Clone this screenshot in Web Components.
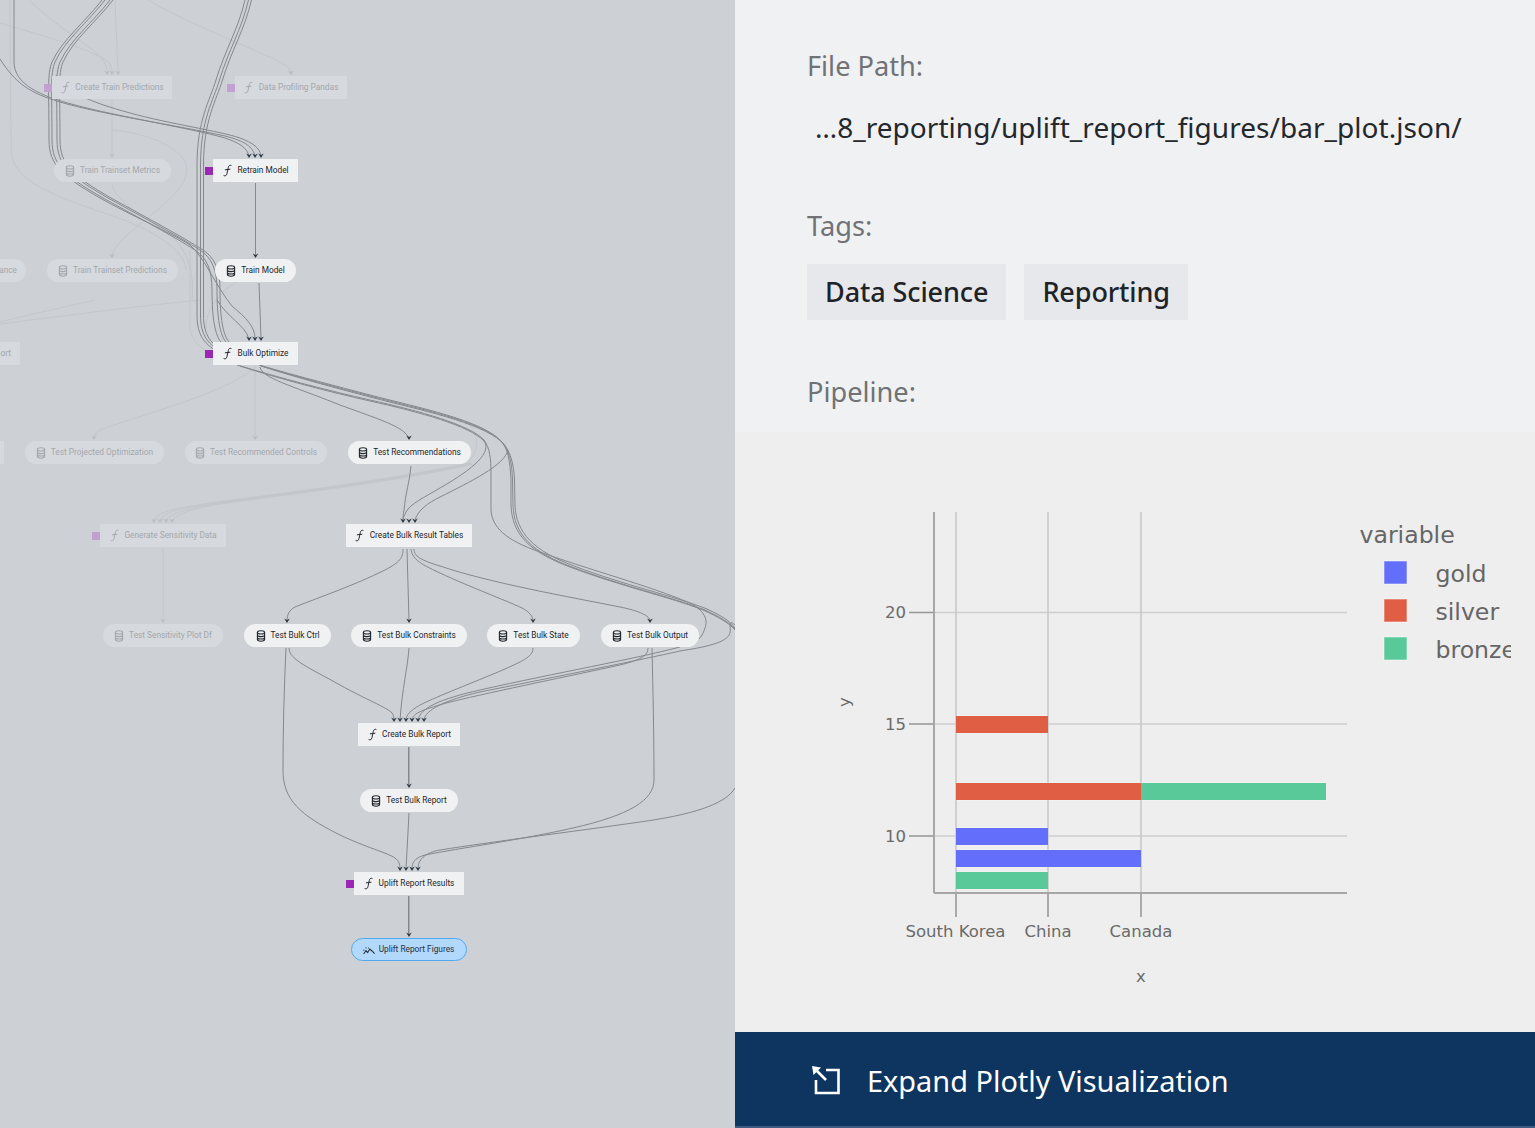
<!DOCTYPE html>
<html lang="en">
<head>
<meta charset="utf-8">
<title>Pipeline viewer</title>
<style>
  html, body { margin: 0; padding: 0; height: 100%; overflow: hidden; }
  body { font-family: "Noto Sans", sans-serif; }
</style>
</head>
<body>
<viz-app>
  <flow-graph slot="graph">
    <flow-node x="52" y="76" w="120" kind="task" param faded>Create Train Predictions</flow-node>
    <flow-node x="235" y="76" w="112" kind="task" param faded>Data Profiling Pandas</flow-node>
    <flow-node x="54" y="159" w="117" kind="data" faded>Train Trainset Metrics</flow-node>
    <flow-node x="213" y="159" w="85" kind="task" param>Retrain Model</flow-node>
    <flow-node x="0" y="259" w="26" kind="none" faded cut>ance</flow-node>
    <flow-node x="47" y="259" w="131" kind="data" faded>Train Trainset Predictions</flow-node>
    <flow-node x="215" y="259" w="81" kind="data">Train Model</flow-node>
    <flow-node x="0" y="342" w="20" kind="none" rect faded cut>ort</flow-node>
    <flow-node x="213" y="342" w="85" kind="task" param>Bulk Optimize</flow-node>
    <flow-node x="0" y="441" w="4" kind="none" rect faded></flow-node>
    <flow-node x="25" y="441" w="139" kind="data" faded>Test Projected Optimization</flow-node>
    <flow-node x="185" y="441" w="142" kind="data" faded>Test Recommended Controls</flow-node>
    <flow-node x="348" y="441" w="123" kind="data">Test Recommendations</flow-node>
    <flow-node x="100" y="524" w="126" kind="task" param faded>Generate Sensitivity Data</flow-node>
    <flow-node x="346" y="524" w="126" kind="task">Create Bulk Result Tables</flow-node>
    <flow-node x="103" y="624" w="120" kind="data" faded>Test Sensitivity Plot Df</flow-node>
    <flow-node x="244" y="624" w="87" kind="data">Test Bulk Ctrl</flow-node>
    <flow-node x="351" y="624" w="116" kind="data">Test Bulk Constraints</flow-node>
    <flow-node x="487" y="624" w="93" kind="data">Test Bulk State</flow-node>
    <flow-node x="601" y="624" w="98" kind="data">Test Bulk Output</flow-node>
    <flow-node x="358" y="723" w="102" kind="task">Create Bulk Report</flow-node>
    <flow-node x="360" y="789" w="98" kind="data">Test Bulk Report</flow-node>
    <flow-node x="354" y="872" w="110" kind="task" param>Uplift Report Results</flow-node>
    <flow-node x="351" y="938" w="116" kind="plot" selected>Uplift Report Figures</flow-node>
  </flow-graph>
  <meta-panel slot="panel">
    <meta-label>File Path:</meta-label>
    <meta-value>…8_reporting/uplift_report_figures/bar_plot.json/</meta-value>
    <meta-label style="margin-top:54px">Tags:</meta-label>
    <tag-row><meta-tag>Data Science</meta-tag><meta-tag>Reporting</meta-tag></tag-row>
    <meta-label style="margin-top:50px">Pipeline:</meta-label>
    <plotly-chart slot="chart"></plotly-chart>
    <expand-button slot="action">Expand Plotly Visualization</expand-button>
  </meta-panel>
</viz-app>

<script>
class VizApp extends HTMLElement {
  constructor() {
    super();
    this.attachShadow({ mode: "open" });
    this.shadowRoot.innerHTML = `
      <style>
        :host { display: grid; grid-template-columns: 735px 800px; height: 1128px; width: 1535px; overflow: hidden; }
      </style>
      <slot name="graph"></slot>
      <slot name="panel"></slot>
    `;
  }
}

// faint edges belong to nodes outside the focused pipeline
const FADED_EDGES = [
  "M29 0C60 30 95 48 103 60C106 64 107 68 107 73",
  "M0 23C40 35 95 50 108 62C112 66 112 70 112 73",
  "M115 0L118 73",
  "M148 0C190 25 270 55 285 65C289 68 291 70 291 73",
  "M112 100L112 157",
  "M10 0L11 150C12 180 50 195 110 215C150 228 186 250 186 270",
  "M112 130C150 133 187 150 187 170C187 200 112 235 112 257",
  "M112 183C112 200 150 220 170 235C185 246 195 270 192 300",
  "M0 322C40 312 70 306 95 300",
  "M0 324C70 315 130 307 200 300",
  "M190 250L190 325C190 335 195 345 205 350",
  "M240 280C220 290 205 310 206 330",
  "M255 366L255 439",
  "M252 370C220 395 140 415 100 430C96 432 94 435 94 439",
  "M470 463C400 478 300 491 210 503C180 508 158 510 154 521",
  "M471 463C400 479 300 492 212 503.5C182 508 162 512 160 521",
  "M472 464C400 480 300 492 214 504C186 509 168 514 166 521",
  "M473 464C400 481 300 493 216 504.5C190 509 174 516 172 521",
  "M468 462C480 450 478 435 470 425",
  "M163 548L163 622"
];

const BUNDLES = [
  // bundle from the top left, runs under Train Model
  { d: "M102 0C85 22 62 40 52 62C47 74 49 90 49 140C49 165 62 176 100 198C140 220 170 236 192 250C204 258 209 270 209 290C209 318 212 335 218 342", off: [[3, 0], [8, 0], [11, 0]] },
  // bundle from the top centre, out past Bulk Optimize
  { d: "M245 0C238 30 225 50 216 80C210 100 197 120 197 165L197 315C197 335 204 345 222 354", off: [[0, 0], [3.5, 0], [6.5, 0]] }
];

const EDGES = [
  "M14 0L14 62C14 84 40 96 75 105C120 117 190 128 225 138C240 143 247 148 249 156",
  "M0 59C16 84 30 93 60 102C100 114 180 126 225 136C245 141 253 147 255 156",
  "M56 75C66 92 90 102 130 113C170 124 220 131 240 138C253 143 260 148 261 156",
  "M255.5 183L255.5 256",
  "M259 283L261 339",
  "M217 300C228 318 245 325 249 339",
  "M102 0C85 22 62 40 52 62C47 74 49 90 49 140C49 165 62 176 100 198C130 215 170 232 190 245C205 258 215 285 232 306C246 318 255 326 255 339",
  "M260 367C262 378 290 385 340 405C370 416 395 424 404 432C407 435 409 437 409 438",
  "M259 365C300 377 340 387 370 395C420 408 480 420 500 440C508 448 510 460 511 480L511 505C512 535 530 552 570 567C620 586 670 597 703 610C718 617 728 622 735 630",
  "M260 365.5C300 378 340 388 370 396C420 409 480 421 501 441C509 449 512 462 512.5 480L513 505C514 535 532 552 572 567C622 586 672 597 705 610C720 617 729 622 735 629",
  "M261 366C301 379 340 389 370 397C420 410 480 422 502 442C510 450 514 464 514.5 480L515 505C516 533 534 551 574 566C624 585 674 596 707 609C722 616 730 621 735 628",
  "M237 365C280 378 330 391 370 400C420 411 470 425 484 440C490 448 491 460 491 473L491 510C492 527 505 540 540 552C590 570 650 586 690 603C705 611 708 620 705 628C703 634 701 637 699 639",
  "M240 366C280 379 330 392 370 401C420 412 470 426 484 441C492 452 475 468 440 488C425 497 410 504 406 512C404 516 403 518 403 520",
  "M508 450C505 465 470 482 440 497C428 503 418 510 415 520",
  "M411 466C410 480 405 495 404 510C403 515 403 518 403 520",
  "M403 549C403 558 400 562 385 570C355 585 320 597 295 607C289 610 287 615 287 621",
  "M407 549L409 621",
  "M411 549C412 558 418 563 440 573C470 587 505 600 522 608C530 612 533 617 533 621",
  "M414 549C414 556 420 560 440 566C490 583 570 597 620 607C640 611 650 616 650 621",
  "M735 625C728 618 731 628 730 633C727 643 705 647 680 651C640 660 560 676 480 692C445 700 425 710 424 720",
  "M680 647C630 660 560 672 480 690C440 699 420 708 418 720",
  "M648 648C648 656 640 660 620 665C570 676 500 690 450 702C425 709 412 713 412 720",
  "M533 648C533 656 525 660 505 669C470 684 440 695 420 705C410 711 406 715 406 720",
  "M409 648C408 665 402 690 400 720",
  "M289 648C289 660 310 668 340 685C365 699 388 708 392 713C394 716 394 718 394 720",
  "M409 747L409 786",
  "M408.5 747L408.5 786",
  "M409 813L406 869",
  "M286 648C284 690 283 730 283 770C283 800 300 815 340 835C365 847 388 853 395 858C399 861 400 864 400 869",
  "M652 648C653 690 654 740 654 780C654 800 630 815 573 828C520 840 460 848 425 855C414 858 412 863 412 869",
  "M735 788C725 805 690 815 640 822C570 832 490 842 440 850C424 853 418 860 418 869",
  "M408.5 896L408.5 935",
  "M409 896L409 935"
];

const ARROWS = [
  [249, 158], [255, 158], [261, 158], [255.5, 258], [249, 341], [255, 341], [261, 341],
  [409, 440], [403, 523], [409, 523], [415, 523], [287, 623], [409, 623], [533, 623], [650, 623],
  [394, 722], [400, 722], [406, 722], [412, 722], [418, 722], [424, 722], [409, 788],
  [400, 871], [406, 871], [412, 871], [418, 871], [409, 937]
];
const FADED_ARROWS = [
  [107, 75], [112, 75], [118, 75], [291, 75], [112, 158], [112, 258], [255, 440], [94, 440],
  [154, 523], [160, 523], [166, 523], [172, 523], [163, 623]
];

const arrow = ([x, y]) => `M${x - 2.8} ${y - 4.5}L${x} ${y}L${x + 2.8} ${y - 4.5}L${x} ${y - 3}Z`;

class FlowGraph extends HTMLElement {
  constructor() {
    super();
    this.attachShadow({ mode: "open" });
    const bundles = BUNDLES.map((b) =>
      b.off.map(([dx, dy]) => `<path d="${b.d}" transform="translate(${dx} ${dy})"/>`).join("")
    ).join("");
    this.shadowRoot.innerHTML = `
      <style>
        :host { display: block; position: relative; height: 100%; background: #cdd0d5; overflow: hidden; }
        svg { position: absolute; left: 0; top: 0; }
        path { fill: none; }
        .faded path { stroke: #c3c6cb; stroke-width: 1; }
        .edges path { stroke: #85888c; stroke-width: 1; }
        .heads path { fill: #2d3a46; }
        .heads.faded path { fill: #b9bcc1; stroke: none; }
      </style>
      <svg width="735" height="1128" viewBox="0 0 735 1128">
        <g class="faded">${FADED_EDGES.map((d) => `<path d="${d}"/>`).join("")}</g>
        <g class="heads faded"><path d="${FADED_ARROWS.map(arrow).join("")}"/></g>
        <g class="edges">${bundles}${EDGES.map((d) => `<path d="${d}"/>`).join("")}</g>
        <g class="heads"><path d="${ARROWS.map(arrow).join("")}"/></g>
      </svg>
      <slot></slot>
    `;
  }
}

const ICONS = {
  task: `<path d="M9.6 1.4C8 .7 7 1.6 6.7 3.4L5.5 8.9C5.1 10.8 4 11.4 2.4 10.6M3.6 5.4L8.6 4.8" fill="none" stroke="currentColor" stroke-width=".9"/>`,
  data: `<g fill="none" stroke="currentColor" stroke-width="1.1"><ellipse cx="6" cy="2.4" rx="3.6" ry="1.6"/><path d="M2.4 2.4V9.6C2.4 10.5 4 11.2 6 11.2S9.6 10.5 9.6 9.6V2.4M2.4 5C2.4 5.9 4 6.6 6 6.6S9.6 5.9 9.6 5M2.4 7.4C2.4 8.3 4 9 6 9S9.6 8.3 9.6 7.4"/></g>`,
  plot: `<g fill="none" stroke="currentColor" stroke-width="1.05"><path d="M.6 10L3 6.6L4.7 8.6L6.8 5L9 7L11.6 9.6"/><path d="M2.6 3.8h.9M.4 6.2h.9M5 4h.9" stroke-width="1.2"/></g>`
};

class FlowNode extends HTMLElement {
  constructor() {
    super();
    this.attachShadow({ mode: "open" });
  }

  connectedCallback() {
    const kind = this.getAttribute("kind");
    const isRect = kind === "task" || this.hasAttribute("rect");
    const cut = this.hasAttribute("cut");
    this.style.left = this.getAttribute("x") + "px";
    this.style.top = this.getAttribute("y") + "px";
    this.style.width = this.getAttribute("w") + "px";
    this.shadowRoot.innerHTML = `
      <style>
        :host {
          display: flex; position: absolute; height: 23px; box-sizing: border-box;
          align-items: center; justify-content: ${cut ? "flex-end" : "center"};
          gap: 5px; padding: ${cut ? "0 9px 0 0" : "0"};
          background: #f0f1f3; color: #20262c;
          font: 400 8.3px Roboto, "Noto Sans", sans-serif; white-space: nowrap;
          border-radius: ${isRect ? "0" : cut ? "0 12px 12px 0" : "12px"};
        }
        :host([faded]) { background: #d6d9dd; color: #a4a8ad; }
        :host([selected]) { background: #b2d8fb; border: 1px solid #52a9ee; color: #27313b; }
        svg { width: 12px; height: 12px; margin: 0 -1px; flex: none; }
        :host([kind="task"]) svg { width: 13px; height: 13px; margin: 0 -1.5px; }
        .label { position: relative; top: -1px; }
        .param { position: absolute; left: -8px; top: 8px; width: 7.5px; height: 7.5px; background: #9b27b5; }
        :host([faded]) .param { background: #c3a0d2; }
      </style>
      ${this.hasAttribute("param") ? `<span class="param"></span>` : ""}
      ${ICONS[kind] ? `<svg viewBox="0 0 12 12">${ICONS[kind]}</svg>` : ""}
      <span class="label"><slot></slot></span>
    `;
  }
}

class MetaPanel extends HTMLElement {
  constructor() {
    super();
    this.attachShadow({ mode: "open" });
    this.shadowRoot.innerHTML = `
      <style>
        :host { display: flex; flex-direction: column; height: 100%; background: #f0f1f3; font-family: "Noto Sans", sans-serif; }
        .details { display: flex; flex-direction: column; padding: 44px 0 18px 72px; }
        .bottom { flex: 1; display: flex; flex-direction: column; min-height: 0; }
      </style>
      <div class="details"><slot></slot></div>
      <div class="bottom">
        <slot name="chart"></slot>
        <slot name="action"></slot>
      </div>
    `;
  }
}

class MetaLabel extends HTMLElement {
  constructor() {
    super();
    this.attachShadow({ mode: "open" });
    this.shadowRoot.innerHTML = `
      <style>:host { display: block; height: 44px; font-size: 27.2px; line-height: 44px; color: #707275; }</style>
      <slot></slot>
    `;
  }
}

class MetaValue extends HTMLElement {
  constructor() {
    super();
    this.attachShadow({ mode: "open" });
    this.shadowRoot.innerHTML = `
      <style>
        :host { display: block; height: 44px; margin: 18px 0 0 8px; font-size: 28px; line-height: 42px; letter-spacing: .04px; color: #24282c; white-space: nowrap; }
      </style>
      <slot></slot>
    `;
  }
}

class TagRow extends HTMLElement {
  constructor() {
    super();
    this.attachShadow({ mode: "open" });
    this.shadowRoot.innerHTML = `
      <style>:host { display: flex; gap: 18px; margin-top: 16px; }</style>
      <slot></slot>
    `;
  }
}

class MetaTag extends HTMLElement {
  constructor() {
    super();
    this.attachShadow({ mode: "open" });
    this.shadowRoot.innerHTML = `
      <style>
        :host { display: block; height: 56px; padding: 0 18px; background: #e6e8eb; font-size: 27px; font-weight: 500; letter-spacing: -.1px; line-height: 56px; color: #1f2327; white-space: nowrap; }
      </style>
      <slot></slot>
    `;
  }
}

class PlotlyChart extends HTMLElement {
  constructor() {
    super();
    this.attachShadow({ mode: "open" });
    const hGrid = [612.5, 724, 836];
    const vGrid = [956, 1048, 1141];
    const bars = [
      [956, 716, 92, "#e05f44"], [956, 783, 185, "#e05f44"], [1141, 783, 185, "#59c99a"],
      [956, 828, 92, "#636efa"], [956, 850, 185, "#636efa"], [956, 872, 92, "#59c99a"]
    ];
    const legend = [[561, "#636efa", "gold"], [599, "#e05f44", "silver"], [637, "#59c99a", "bronze"]];
    this.shadowRoot.innerHTML = `
      <style>
        :host { display: block; flex: 1; min-height: 0; background: #eeeeee; }
        svg { display: block; }
        text { font-family: "DejaVu Sans", sans-serif; fill: #6a6a6a; }
        .grid { stroke: #cecece; stroke-width: 1.6; }
        .vgrid { stroke: #c8c8c8; stroke-width: 1.6; }
        .axis { stroke: #a6a6a6; stroke-width: 2; }
        .tick { stroke: #999; stroke-width: 1.6; }
        .t { font-size: 16.5px; }
        .l { font-size: 23.6px; fill: #666; }
      </style>
      <svg width="800" height="600" viewBox="735 432 800 600">
        <defs><clipPath id="lc"><rect x="1340" y="500" width="171" height="180"/></clipPath></defs>
        ${hGrid.map((y) => `<line class="grid" x1="934" x2="1347" y1="${y}" y2="${y}"/><line class="tick" x1="909" x2="934" y1="${y}" y2="${y}"/>`).join("")}
        ${vGrid.map((x) => `<line class="vgrid" x1="${x}" x2="${x}" y1="512" y2="893"/><line class="tick" x1="${x}" x2="${x}" y1="893" y2="917"/>`).join("")}
        ${bars.map(([x, y, w, c]) => `<rect x="${x}" y="${y - 0.5}" width="${w}" height="18" fill="#fff" opacity=".35"/><rect x="${x}" y="${y}" width="${w}" height="17" fill="${c}"/>`).join("")}
        <line class="axis" x1="934" x2="934" y1="512" y2="893"/>
        <line class="axis" x1="934" x2="1347" y1="893" y2="893"/>
        <text class="t" x="906" y="618" text-anchor="end">20</text>
        <text class="t" x="906" y="730" text-anchor="end">15</text>
        <text class="t" x="906" y="842" text-anchor="end">10</text>
        <text class="t" x="955.5" y="937" text-anchor="middle">South Korea</text>
        <text class="t" x="1048" y="937" text-anchor="middle">China</text>
        <text class="t" x="1141" y="937" text-anchor="middle">Canada</text>
        <text class="t" x="1141" y="982" text-anchor="middle">x</text>
        <text class="t" transform="translate(849.5 702) rotate(-90)" text-anchor="middle">y</text>
        <g clip-path="url(#lc)">
          <text class="l" x="1359.5" y="543">variable</text>
          ${legend.map(([y, c, s]) => `<rect x="1384" y="${y}" width="23" height="23" fill="${c}" stroke="#fff" stroke-opacity=".5"/><text class="l" x="1435.5" y="${y + 21}">${s}</text>`).join("")}
        </g>
      </svg>
    `;
  }
}

class ExpandButton extends HTMLElement {
  constructor() {
    super();
    this.attachShadow({ mode: "open" });
    this.shadowRoot.innerHTML = `
      <style>
        :host {
          display: flex; align-items: center; gap: 23px; height: 96px; box-sizing: border-box;
          padding: 2px 0 0 75px; background: #0e3460; border-bottom: 2px solid #3c5c84;
          font-size: 28.9px; color: #fff; white-space: nowrap;
        }
        svg { width: 34px; height: 34px; margin-top: 2px; flex: none; }
      </style>
      <svg viewBox="0 0 34 34">
        <path d="M16 6H28.5V29H6V16" fill="none" stroke="#fff" stroke-width="2.6"/>
        <path d="M2 2L11 3.5L3.5 11Z" fill="#fff"/>
        <path d="M6 6L16 16" stroke="#fff" stroke-width="2.6"/>
      </svg>
      <slot></slot>
    `;
  }
}

customElements.define("viz-app", VizApp);
customElements.define("flow-graph", FlowGraph);
customElements.define("flow-node", FlowNode);
customElements.define("meta-panel", MetaPanel);
customElements.define("meta-label", MetaLabel);
customElements.define("meta-value", MetaValue);
customElements.define("tag-row", TagRow);
customElements.define("meta-tag", MetaTag);
customElements.define("plotly-chart", PlotlyChart);
customElements.define("expand-button", ExpandButton);
</script>
</body>
</html>
